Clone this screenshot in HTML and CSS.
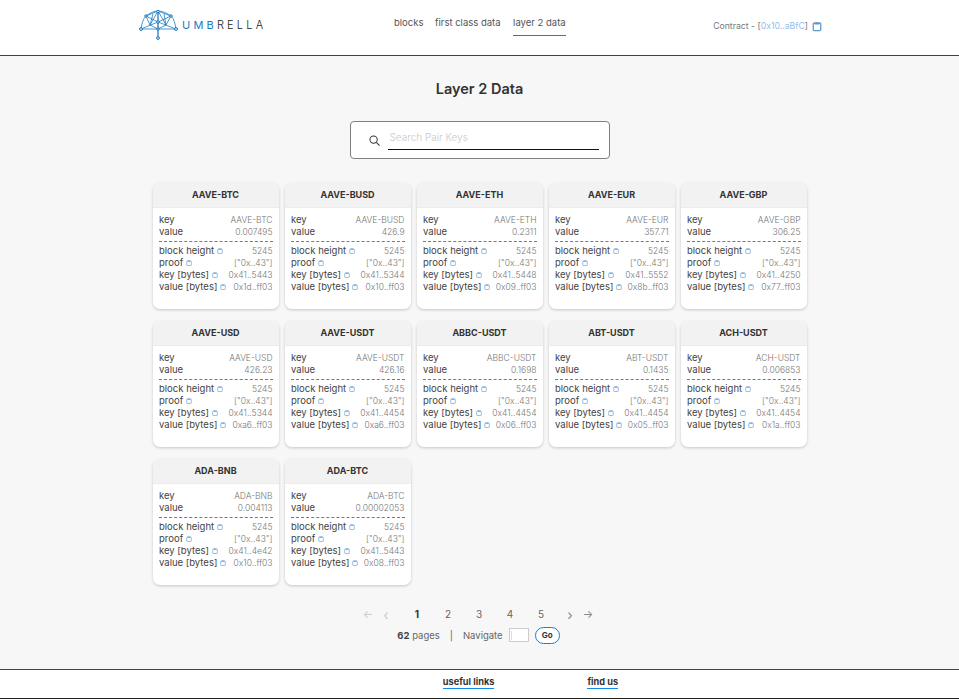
FILE: index.html
```html
<!DOCTYPE html>
<html lang="en">
<head>
    <meta charset="UTF-8">
    <meta name="viewport" content="width=device-width, initial-scale=1.0">
    <title>Umbrella - Layer 2 Data</title>
    <link rel="stylesheet" href="styles.css">
</head>
<body>
    <svg class="icon-defs" width="0" height="0">
        <symbol id="clip" viewBox="0 0 12 12">
            <rect x="1.500" y="2" width="9" height="9" rx="1" fill="none" stroke="currentColor" stroke-width="1.500"/>
            <rect x="3" y="1" width="6" height="2.500" rx=".5" fill="currentColor"/>
        </symbol>
    </svg>

    <header class="topbar">
        <a class="logo" href="#">
            <svg class="logo-mark" width="39" height="30" viewBox="0 0 39 30" fill="none" stroke="#1a7cc4" stroke-width=".8">
                <path d="M2 19C3 13 4 9 7 6C11 3 15 1 19 1C23 1 28 3 32 6C35 9 36 13 37 19"/>
                <path d="M7 6L19 12L32 6M19 1L7 6M19 1L32 6M2 19L19 12L37 19M2 19L19 19L37 19M7 6L11 15L19 19L27 15L32 6M14 4L11 15M25 4L27 15M11 15L19 1L27 15"/>
                <path d="M19 1V28" stroke="#0b5da8" stroke-width="1.100"/>
                <g fill="#fff" stroke="#0b6cb8" stroke-width="1">
                    <circle cx="19" cy="1.500" r="1.300"/>
                    <circle cx="7" cy="6" r="1.200"/>
                    <circle cx="32" cy="6" r="1.200"/>
                    <circle cx="2" cy="19" r="1.400"/>
                    <circle cx="37" cy="19" r="1.400"/>
                    <circle cx="19" cy="12" r="1.300"/>
                    <circle cx="19" cy="19" r="1.200"/>
                    <circle cx="19" cy="28" r="1.400"/>
                </g>
            </svg>
            <span class="logo-text"><span class="logo-blue">UMB</span>RELLA</span>
        </a>
        <nav class="nav">
            <a href="#">blocks</a>
            <a href="#">first class data</a>
            <a class="active" href="#">layer 2 data</a>
        </nav>
        <div class="contract">
            <span>Contract - [<a href="#">0x10..aBfC</a>]</span>
            <svg class="contract-clip"><use href="#clip"/></svg>
        </div>
    </header>

    <main class="content">
        <h1>Layer 2 Data</h1>

        <div class="search">
            <svg class="search-icon" width="11" height="11" viewBox="0 0 12 12" fill="none" stroke="#333" stroke-width="1.100">
                <circle cx="5" cy="5" r="4"/>
                <path d="M8 8l3.500 3.500"/>
            </svg>
            <div class="search-field">Search Pair Keys</div>
        </div>

        <section class="cards">
            <article class="card">
                <h2>AAVE-BTC</h2>
                <div class="card-body">
                    <div class="row"><span>key</span><span class="val">AAVE-BTC</span></div>
                    <div class="row"><span>value</span><span class="val">0.007495</span></div>
                    <hr>
                    <div class="row"><span>block height <svg class="clip"><use href="#clip"/></svg></span><span class="val">5245</span></div>
                    <div class="row"><span>proof <svg class="clip"><use href="#clip"/></svg></span><span class="val">["0x..43"]</span></div>
                    <div class="row"><span>key [bytes] <svg class="clip"><use href="#clip"/></svg></span><span class="val">0x41..5443</span></div>
                    <div class="row"><span>value [bytes] <svg class="clip"><use href="#clip"/></svg></span><span class="val">0x1d..ff03</span></div>
                </div>
            </article>
            <article class="card">
                <h2>AAVE-BUSD</h2>
                <div class="card-body">
                    <div class="row"><span>key</span><span class="val">AAVE-BUSD</span></div>
                    <div class="row"><span>value</span><span class="val">426.9</span></div>
                    <hr>
                    <div class="row"><span>block height <svg class="clip"><use href="#clip"/></svg></span><span class="val">5245</span></div>
                    <div class="row"><span>proof <svg class="clip"><use href="#clip"/></svg></span><span class="val">["0x..43"]</span></div>
                    <div class="row"><span>key [bytes] <svg class="clip"><use href="#clip"/></svg></span><span class="val">0x41..5344</span></div>
                    <div class="row"><span>value [bytes] <svg class="clip"><use href="#clip"/></svg></span><span class="val">0x10..ff03</span></div>
                </div>
            </article>
            <article class="card">
                <h2>AAVE-ETH</h2>
                <div class="card-body">
                    <div class="row"><span>key</span><span class="val">AAVE-ETH</span></div>
                    <div class="row"><span>value</span><span class="val">0.2311</span></div>
                    <hr>
                    <div class="row"><span>block height <svg class="clip"><use href="#clip"/></svg></span><span class="val">5245</span></div>
                    <div class="row"><span>proof <svg class="clip"><use href="#clip"/></svg></span><span class="val">["0x..43"]</span></div>
                    <div class="row"><span>key [bytes] <svg class="clip"><use href="#clip"/></svg></span><span class="val">0x41..5448</span></div>
                    <div class="row"><span>value [bytes] <svg class="clip"><use href="#clip"/></svg></span><span class="val">0x09..ff03</span></div>
                </div>
            </article>
            <article class="card">
                <h2>AAVE-EUR</h2>
                <div class="card-body">
                    <div class="row"><span>key</span><span class="val">AAVE-EUR</span></div>
                    <div class="row"><span>value</span><span class="val">357.71</span></div>
                    <hr>
                    <div class="row"><span>block height <svg class="clip"><use href="#clip"/></svg></span><span class="val">5245</span></div>
                    <div class="row"><span>proof <svg class="clip"><use href="#clip"/></svg></span><span class="val">["0x..43"]</span></div>
                    <div class="row"><span>key [bytes] <svg class="clip"><use href="#clip"/></svg></span><span class="val">0x41..5552</span></div>
                    <div class="row"><span>value [bytes] <svg class="clip"><use href="#clip"/></svg></span><span class="val">0x8b..ff03</span></div>
                </div>
            </article>
            <article class="card">
                <h2>AAVE-GBP</h2>
                <div class="card-body">
                    <div class="row"><span>key</span><span class="val">AAVE-GBP</span></div>
                    <div class="row"><span>value</span><span class="val">306.25</span></div>
                    <hr>
                    <div class="row"><span>block height <svg class="clip"><use href="#clip"/></svg></span><span class="val">5245</span></div>
                    <div class="row"><span>proof <svg class="clip"><use href="#clip"/></svg></span><span class="val">["0x..43"]</span></div>
                    <div class="row"><span>key [bytes] <svg class="clip"><use href="#clip"/></svg></span><span class="val">0x41..4250</span></div>
                    <div class="row"><span>value [bytes] <svg class="clip"><use href="#clip"/></svg></span><span class="val">0x77..ff03</span></div>
                </div>
            </article>
            <article class="card">
                <h2>AAVE-USD</h2>
                <div class="card-body">
                    <div class="row"><span>key</span><span class="val">AAVE-USD</span></div>
                    <div class="row"><span>value</span><span class="val">426.23</span></div>
                    <hr>
                    <div class="row"><span>block height <svg class="clip"><use href="#clip"/></svg></span><span class="val">5245</span></div>
                    <div class="row"><span>proof <svg class="clip"><use href="#clip"/></svg></span><span class="val">["0x..43"]</span></div>
                    <div class="row"><span>key [bytes] <svg class="clip"><use href="#clip"/></svg></span><span class="val">0x41..5344</span></div>
                    <div class="row"><span>value [bytes] <svg class="clip"><use href="#clip"/></svg></span><span class="val">0xa6..ff03</span></div>
                </div>
            </article>
            <article class="card">
                <h2>AAVE-USDT</h2>
                <div class="card-body">
                    <div class="row"><span>key</span><span class="val">AAVE-USDT</span></div>
                    <div class="row"><span>value</span><span class="val">426.16</span></div>
                    <hr>
                    <div class="row"><span>block height <svg class="clip"><use href="#clip"/></svg></span><span class="val">5245</span></div>
                    <div class="row"><span>proof <svg class="clip"><use href="#clip"/></svg></span><span class="val">["0x..43"]</span></div>
                    <div class="row"><span>key [bytes] <svg class="clip"><use href="#clip"/></svg></span><span class="val">0x41..4454</span></div>
                    <div class="row"><span>value [bytes] <svg class="clip"><use href="#clip"/></svg></span><span class="val">0xa6..ff03</span></div>
                </div>
            </article>
            <article class="card">
                <h2>ABBC-USDT</h2>
                <div class="card-body">
                    <div class="row"><span>key</span><span class="val">ABBC-USDT</span></div>
                    <div class="row"><span>value</span><span class="val">0.1698</span></div>
                    <hr>
                    <div class="row"><span>block height <svg class="clip"><use href="#clip"/></svg></span><span class="val">5245</span></div>
                    <div class="row"><span>proof <svg class="clip"><use href="#clip"/></svg></span><span class="val">["0x..43"]</span></div>
                    <div class="row"><span>key [bytes] <svg class="clip"><use href="#clip"/></svg></span><span class="val">0x41..4454</span></div>
                    <div class="row"><span>value [bytes] <svg class="clip"><use href="#clip"/></svg></span><span class="val">0x06..ff03</span></div>
                </div>
            </article>
            <article class="card">
                <h2>ABT-USDT</h2>
                <div class="card-body">
                    <div class="row"><span>key</span><span class="val">ABT-USDT</span></div>
                    <div class="row"><span>value</span><span class="val">0.1435</span></div>
                    <hr>
                    <div class="row"><span>block height <svg class="clip"><use href="#clip"/></svg></span><span class="val">5245</span></div>
                    <div class="row"><span>proof <svg class="clip"><use href="#clip"/></svg></span><span class="val">["0x..43"]</span></div>
                    <div class="row"><span>key [bytes] <svg class="clip"><use href="#clip"/></svg></span><span class="val">0x41..4454</span></div>
                    <div class="row"><span>value [bytes] <svg class="clip"><use href="#clip"/></svg></span><span class="val">0x05..ff03</span></div>
                </div>
            </article>
            <article class="card">
                <h2>ACH-USDT</h2>
                <div class="card-body">
                    <div class="row"><span>key</span><span class="val">ACH-USDT</span></div>
                    <div class="row"><span>value</span><span class="val">0.006853</span></div>
                    <hr>
                    <div class="row"><span>block height <svg class="clip"><use href="#clip"/></svg></span><span class="val">5245</span></div>
                    <div class="row"><span>proof <svg class="clip"><use href="#clip"/></svg></span><span class="val">["0x..43"]</span></div>
                    <div class="row"><span>key [bytes] <svg class="clip"><use href="#clip"/></svg></span><span class="val">0x41..4454</span></div>
                    <div class="row"><span>value [bytes] <svg class="clip"><use href="#clip"/></svg></span><span class="val">0x1a..ff03</span></div>
                </div>
            </article>
            <article class="card">
                <h2>ADA-BNB</h2>
                <div class="card-body">
                    <div class="row"><span>key</span><span class="val">ADA-BNB</span></div>
                    <div class="row"><span>value</span><span class="val">0.004113</span></div>
                    <hr>
                    <div class="row"><span>block height <svg class="clip"><use href="#clip"/></svg></span><span class="val">5245</span></div>
                    <div class="row"><span>proof <svg class="clip"><use href="#clip"/></svg></span><span class="val">["0x..43"]</span></div>
                    <div class="row"><span>key [bytes] <svg class="clip"><use href="#clip"/></svg></span><span class="val">0x41..4e42</span></div>
                    <div class="row"><span>value [bytes] <svg class="clip"><use href="#clip"/></svg></span><span class="val">0x10..ff03</span></div>
                </div>
            </article>
            <article class="card">
                <h2>ADA-BTC</h2>
                <div class="card-body">
                    <div class="row"><span>key</span><span class="val">ADA-BTC</span></div>
                    <div class="row"><span>value</span><span class="val">0.00002053</span></div>
                    <hr>
                    <div class="row"><span>block height <svg class="clip"><use href="#clip"/></svg></span><span class="val">5245</span></div>
                    <div class="row"><span>proof <svg class="clip"><use href="#clip"/></svg></span><span class="val">["0x..43"]</span></div>
                    <div class="row"><span>key [bytes] <svg class="clip"><use href="#clip"/></svg></span><span class="val">0x41..5443</span></div>
                    <div class="row"><span>value [bytes] <svg class="clip"><use href="#clip"/></svg></span><span class="val">0x08..ff03</span></div>
                </div>
            </article>
        </section>

        <div class="pager">
            <div class="pages">
                <span class="arrow faint">&#8592;</span>
                <span class="chev faint">&#8249;</span>
                <a class="page current" href="#">1</a>
                <a class="page" href="#">2</a>
                <a class="page" href="#">3</a>
                <a class="page" href="#">4</a>
                <a class="page" href="#">5</a>
                <span class="chev">&#8250;</span>
                <span class="arrow">&#8594;</span>
            </div>
            <div class="page-nav">
                <span><b>62</b> pages</span>
                <span class="sep">|</span>
                <span>Navigate</span>
                <span class="page-input"></span>
                <button class="go">Go</button>
            </div>
        </div>
    </main>

    <footer class="footer">
        <a href="#">useful links</a>
        <a href="#">find us</a>
    </footer>
</body>
</html>
```

FILE: styles.css
```css
* {
    box-sizing: border-box;
}
html, body {
    margin: 0;
    height: 100%;
}
body {
    display: flex;
    flex-direction: column;
    height: 699px;
    overflow: hidden;
    font-family: 'Inter', 'Open Sans', sans-serif;
    font-size: 9.5px;
    color: #333;
    background: #f7f7f7;
}
a {
    color: inherit;
    text-decoration: none;
}
.icon-defs {
    display: none;
}

/* header */
.topbar {
    display: grid;
    grid-template-columns: 255px 1fr 210px;
    height: 56px;
    padding: 0 137px 0 139px;
    background: #fff;
    border-bottom: 1px solid #0f4c8a;
}
.logo {
    display: flex;
    align-items: center;
    gap: 4px;
    height: 46px;
    margin-top: 2px;
}
.logo-mark {
    display: block;
    flex: none;
}
.logo-text {
    font-size: 11px;
    font-weight: 300;
    letter-spacing: 3.2px;
    color: #222;
}
.logo-blue {
    font-weight: 400;
    color: #1a7cc4;
}
.nav {
    display: flex;
    gap: 11.5px;
    height: 36px;
}
.nav a {
    padding-top: 17px;
    height: 36px;
    font-size: 9.5px;
    color: #555;
}
.nav a.active {
    margin-left: 1px;
    border-bottom: 1px solid #1a7fd0;
}
.contract {
    display: flex;
    align-items: center;
    justify-content: flex-end;
    height: 52px;
    font-size: 8.7px;
    color: #777;
}
.contract a {
    color: #8fc0f0;
}
.contract-clip {
    flex: none;
    width: 10px;
    height: 11px;
    margin-left: 4px;
    color: #5e97cc;
}

/* main */
.content {
    flex: 1;
    display: flex;
    flex-direction: column;
    align-items: center;
}
h1 {
    margin: 24px 0 0;
    font-size: 14.5px;
    line-height: 17px;
    font-weight: 600;
    color: #333;
}
.search {
    display: flex;
    align-items: center;
    width: 260px;
    height: 38px;
    margin-top: 24px;
    padding: 0 10px 0 18px;
    background: #fff;
    border: 1px solid #808080;
    border-radius: 4px;
}
.search-icon {
    flex: none;
    margin-right: 8px;
    margin-top: 1px;
}
.search-field {
    flex: 1;
    align-self: flex-start;
    height: 22px;
    margin-top: 6px;
    padding: 3px 2px 0;
    font-size: 10px;
    font-weight: 300;
    color: #c8c8c8;
    border-bottom: 1px solid #111;
}

/* cards */
.cards {
    display: grid;
    grid-template-columns: repeat(5, 126px);
    grid-auto-rows: 126px;
    gap: 12px 6px;
    margin-top: 24px;
}
.card {
    display: flex;
    flex-direction: column;
    background: #fff;
    border-radius: 7px;
    box-shadow: 0 1px 3px rgba(0, 0, 0, .2);
    overflow: hidden;
}
.card h2 {
    margin: 0;
    height: 25px;
    font-size: 9px;
    line-height: 24px;
    font-weight: 700;
    text-align: center;
    color: #333;
    background: #f2f2f2;
    border-bottom: 1px solid #ececec;
}
.card-body {
    padding: 6px 6px 0 6.5px;
}
.row {
    display: flex;
    justify-content: space-between;
    align-items: center;
    height: 12px;
    line-height: 12px;
    color: #444;
    white-space: nowrap;
}
.val {
    font-weight: 300;
    font-size: 8.5px;
    color: #777;
}
.card hr {
    height: 0;
    margin: 3px 0;
    border: 0;
    border-top: 1px dashed #0d9af0;
}
.clip {
    display: inline-block;
    width: 6px;
    height: 6px;
    vertical-align: .5px;
    color: #7aa7d6;
}

/* pagination */
.pager {
    display: flex;
    flex-direction: column;
    align-items: center;
    margin-top: 21px;
}
.pages {
    display: flex;
    align-items: center;
    height: 16px;
    padding-right: 3px;
    font-size: 10px;
    color: #666;
}
.page {
    width: 31px;
    text-align: center;
}
.page.current {
    font-weight: 700;
    color: #333;
}
.arrow {
    width: 14px;
    text-align: center;
    font-size: 11px;
    color: #888;
}
.chev {
    width: 22px;
    text-align: center;
    font-size: 14px;
    color: #888;
}
.faint {
    color: #ccc;
}
.pages .chev.faint {
    margin-right: 4.5px;
}
.pages .chev:not(.faint) {
    margin-left: 2.5px;
}
.page-nav {
    display: flex;
    align-items: center;
    height: 20px;
    margin-top: 3px;
    padding-right: 2px;
    color: #666;
}
.page-nav b {
    font-weight: 700;
    color: #444;
}
.sep {
    margin: 0 10px;
}
.page-input {
    display: flex;
    align-items: center;
    width: 20px;
    height: 14px;
    margin-left: 6px;
    padding-left: 1px;
    background: #fff;
    border: 1px solid #ccc;
}
.page-input::before {
    content: "";
    width: 1px;
    height: 9px;
    background: #ddd;
}
.go {
    width: 25px;
    height: 17px;
    margin-left: 6px;
    padding: 0;
    font-family: inherit;
    font-size: 8px;
    font-weight: 700;
    color: #333;
    background: #fff;
    border: 1px solid #1a7fd0;
    border-radius: 9px;
}

/* footer */
.footer {
    display: flex;
    justify-content: center;
    gap: 93px;
    height: 30px;
    padding: 6px 0 0 102px;
    background: #fff;
    border-top: 1px solid #0f4c8a;
    border-bottom: 1px solid #222;
}
.footer a {
    height: 13px;
    font-size: 9.2px;
    line-height: 12px;
    font-weight: 700;
    color: #333;
    border-bottom: 1px solid #0d8bf0;
}
```
